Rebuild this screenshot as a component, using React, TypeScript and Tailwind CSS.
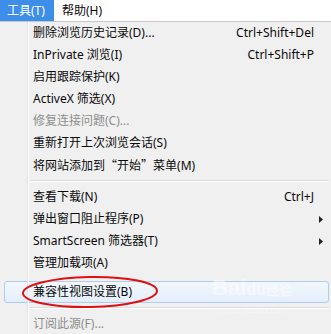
import React from "react";

type Item =
  | { kind: "item"; label: string; shortcut?: string; sub?: boolean; disabled?: boolean; hl?: boolean }
  | { kind: "sep" }
  | { kind: "gap" };

const items: Item[] = [
  { kind: "item", label: "删除浏览历史记录(D)...", shortcut: "Ctrl+Shift+Del" },
  { kind: "item", label: "InPrivate 浏览(I)", shortcut: "Ctrl+Shift+P" },
  { kind: "item", label: "启用跟踪保护(K)" },
  { kind: "item", label: "ActiveX 筛选(X)" },
  { kind: "item", label: "修复连接问题(C)...", disabled: true },
  { kind: "item", label: "重新打开上次浏览会话(S)" },
  { kind: "item", label: "将网站添加到“开始”菜单(M)" },
  { kind: "sep" },
  { kind: "item", label: "查看下载(N)", shortcut: "Ctrl+J" },
  { kind: "item", label: "弹出窗口阻止程序(P)", sub: true },
  { kind: "item", label: "SmartScreen 筛选器(T)", sub: true },
  { kind: "item", label: "管理加载项(A)" },
  { kind: "gap" },
  { kind: "item", label: "兼容性视图设置(B)", hl: true },
  { kind: "sep" },
  { kind: "item", label: "订阅此源(F)...", disabled: true },
];

const CJK = '"Noto Sans CJK SC", sans-serif';

function Label({ text }: { text: string }) {
  const parts = text.split(/([“”])/).filter((p) => p.length > 0);
  return (
    <>
      {parts.map((p, i) =>
        p === "“" || p === "”" ? (
          <span key={i} style={{ fontFamily: CJK }}>
            {p}
          </span>
        ) : (
          <span key={i}>{p}</span>
        )
      )}
    </>
  );
}

export default function App() {
  return (
    <div
      className="relative w-[331px] h-[334px] overflow-hidden bg-[#f0f0f0] text-[12px] text-[#0a0a0a]"
      style={{ fontFamily: '"Noto Sans", "Noto Sans CJK SC", sans-serif' }}
    >
      {/* menu bar */}
      <div className="flex h-[22px] bg-white border-b border-[#c8c8c8]">
        <div className="flex items-center h-[21px] w-[54px] pl-[7px] bg-[#3d8ee8] text-white">工具(T)</div>
        <div className="flex items-center h-[21px] pl-[8px]">帮助(H)</div>
      </div>

      {/* menu body */}
      <div className="relative flex">
        {/* highlight row */}
        <div className="absolute left-[4px] right-[2px] top-[259px] h-[22px] rounded-[3px] border border-[#b0cdee] bg-gradient-to-b from-[#f2f7fd] to-[#e4eefb]" />

        <div className="relative w-[28px] shrink-0 border-r border-[#e2e3e3]" />
        <div className="relative w-px shrink-0 bg-white" />
        <div className="relative flex-1 flex flex-col">
          {items.map((it, i) => {
            if (it.kind === "sep")
              return (
                <div key={i} className="h-[10px] flex flex-col justify-center pl-[1px] pr-[2px]">
                  <div className="h-px bg-[#dcdcdc]" />
                  <div className="h-px bg-white" />
                </div>
              );
            if (it.kind === "gap") return <div key={i} className="h-[7px]" />;
            return (
              <div
                key={i}
                className={
                  "flex items-center h-[22px] pl-[4px] pr-[17px] " +
                  (it.disabled ? "text-[#8d8d8d]" : "")
                }
              >
                <span className="flex-1 whitespace-nowrap">
                  <Label text={it.label} />
                </span>
                {it.shortcut && <span className="whitespace-nowrap">{it.shortcut}</span>}
                {it.sub && (
                  <svg width="4" height="7" viewBox="0 0 4 7" className="mr-[-9px]">
                    <path d="M0 0 L4 3.5 L0 7 Z" fill="#222" />
                  </svg>
                )}
              </div>
            );
          })}
        </div>
      </div>

      {/* baidu watermark */}
      <div
        className="absolute left-[212px] top-[277px] text-white/50 text-[22px] font-bold leading-none pointer-events-none"
        style={{ fontFamily: '"Liberation Sans", sans-serif' }}
      >
        Bai<span className="text-[16px]">du</span>
        <span className="text-[13px]" style={{ fontFamily: CJK }}>
          经验
        </span>
      </div>
      <div
        className="absolute left-[215px] top-[304px] text-white/40 text-[9px] pointer-events-none"
        style={{ fontFamily: '"Liberation Sans", sans-serif' }}
      >
        jingyan.baidu.com
      </div>

      {/* red ellipse annotation */}
      <svg className="absolute left-0 top-0 pointer-events-none" width="331" height="334">
        <ellipse
          cx="90"
          cy="292"
          rx="67"
          ry="15"
          fill="none"
          stroke="#e01010"
          strokeWidth="2"
          transform="rotate(-1 90 292)"
        />
      </svg>
    </div>
  );
}
